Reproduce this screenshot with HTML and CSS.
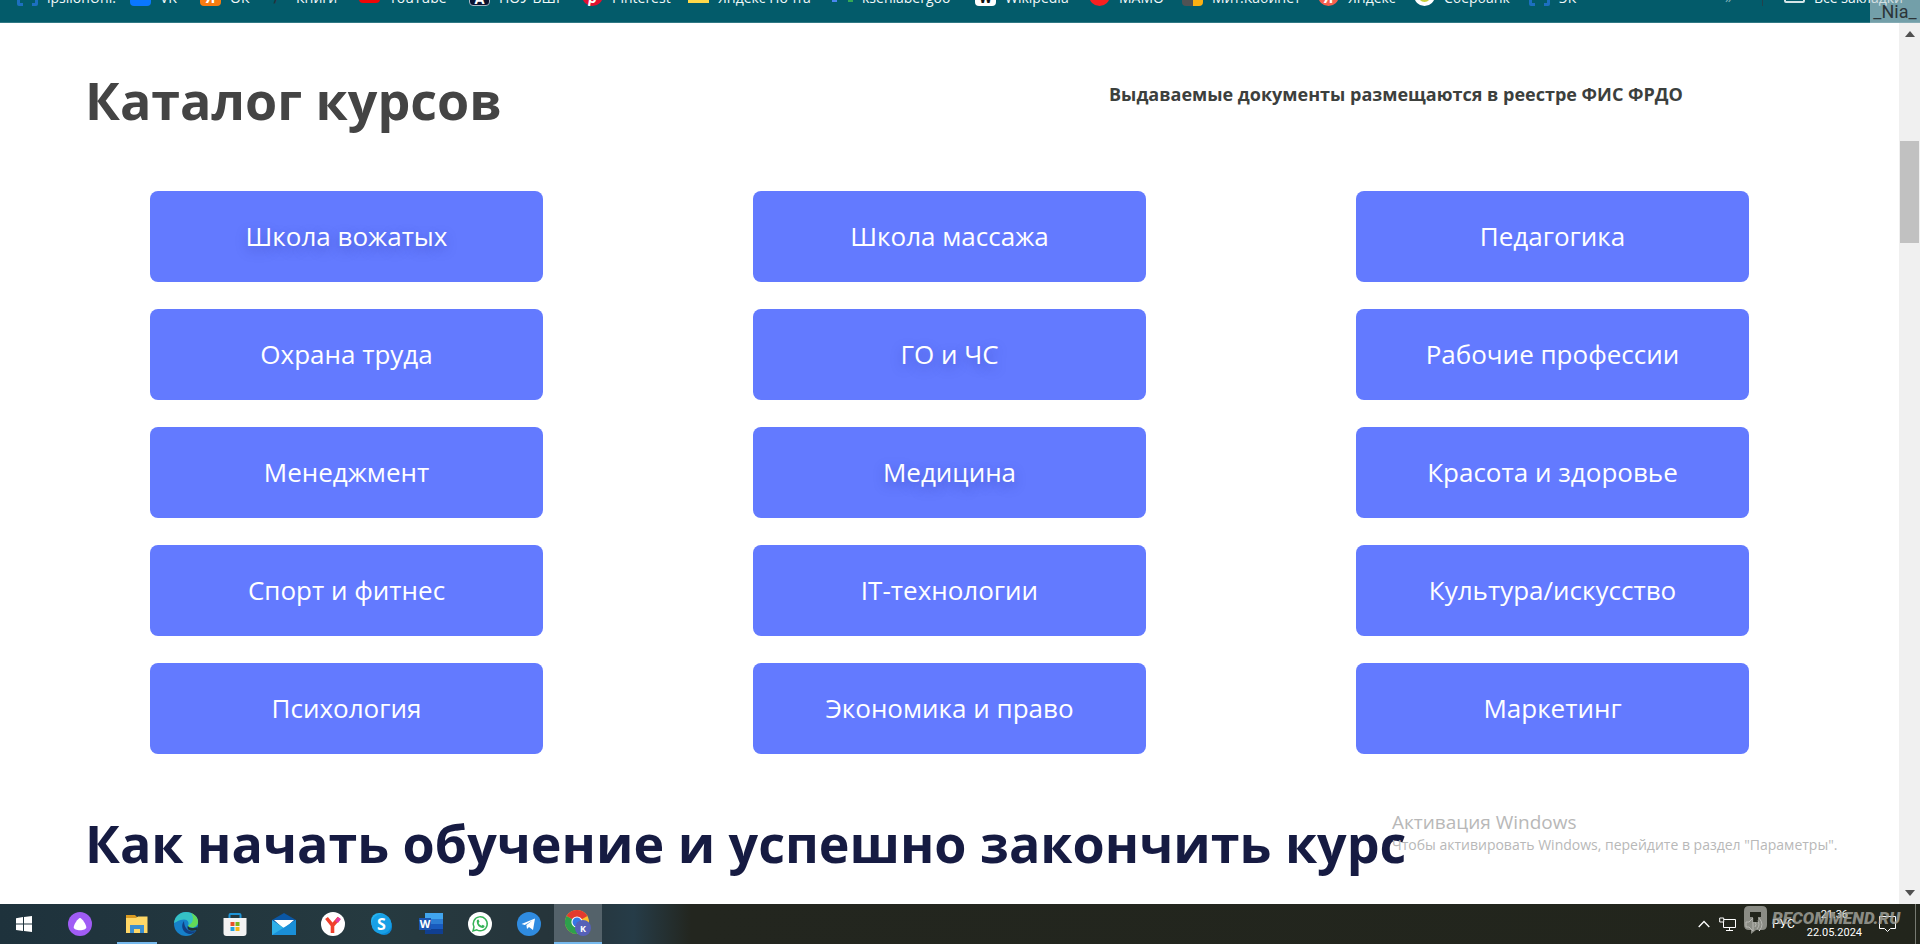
FILE: index.html
```
<!DOCTYPE html>
<html lang="ru">
<head>
<meta charset="utf-8">
<title>Каталог курсов</title>
<link rel="stylesheet" href="styles.css">
</head>
<body>
<div class="screen">
  <nav class="bookmarks" aria-label="Закладки">
    <a class="bm" href="#"><span class="ico brackets"></span>ipsilonUni.</a>
    <a class="bm" href="#"><span class="ico vk"></span>VK</a>
    <a class="bm" href="#"><span class="ico ok">Я</span>ОК</a>
    <a class="bm" href="#"><span class="ico pen">/</span>Книги</a>
    <a class="bm" href="#"><span class="ico yt"></span>YouTube</a>
    <a class="bm" href="#"><span class="ico navy">А</span>НОУ ВШГ</a>
    <a class="bm" href="#"><span class="ico pin">p</span>Pinterest</a>
    <a class="bm" href="#"><span class="ico mailya"></span>Яндекс Почта</a>
    <a class="bm" href="#"><span class="ico meet"></span>kseniabergoo</a>
    <a class="bm" href="#"><span class="ico wiki">W</span>Wikipedia</a>
    <a class="bm" href="#"><span class="ico red"></span>МАМО</a>
    <a class="bm" href="#"><span class="ico duo"></span>Мит.Кабинет</a>
    <a class="bm" href="#"><span class="ico coral">Я</span>Яндекс</a>
    <a class="bm" href="#"><span class="ico sber"></span>Сбербанк</a>
    <a class="bm" href="#"><span class="ico brackets"></span>ЭК</a>
    <a class="bm dim" href="#">»</a>
    <span class="bar-sep"></span>
    <a class="bm" href="#"><span class="ico folder"></span>Все закладки</a>
  </nav>
  <div class="view">
    <main class="page">
      <header class="head">
        <h1>Каталог курсов</h1>
        <p class="note">Выдаваемые документы размещаются в реестре ФИС ФРДО</p>
      </header>
      <div class="courses">
        <button class="course glow">Школа вожатых</button>
        <button class="course">Школа массажа</button>
        <button class="course">Педагогика</button>
        <button class="course">Охрана труда</button>
        <button class="course glow">ГО и ЧС</button>
        <button class="course">Рабочие профессии</button>
        <button class="course">Менеджмент</button>
        <button class="course glow">Медицина</button>
        <button class="course">Красота и здоровье</button>
        <button class="course">Спорт и фитнес</button>
        <button class="course">IT-технологии</button>
        <button class="course">Культура/искусство</button>
        <button class="course">Психология</button>
        <button class="course">Экономика и право</button>
        <button class="course">Маркетинг</button>
      </div>
      <h2>Как начать обучение и успешно закончить курс</h2>
    </main>
    <div class="scroll" aria-hidden="true">
      <svg width="10" height="6" viewBox="0 0 10 6"><path d="M0 6 5 0l5 6z" fill="#505050"/></svg>
      <div class="track"><div class="thumb"></div></div>
      <svg width="10" height="6" viewBox="0 0 10 6"><path d="M0 0h10L5 6z" fill="#505050"/></svg>
    </div>
  </div>
  <footer class="taskbar">
    <div class="apps">
      <button class="app" aria-label="Пуск"><svg viewBox="0 0 24 24"><path d="M4 6.2 11 5v6.5H4zM12 4.9 20 4v7.5h-8zM4 12.5h7V19l-7-1zM12 12.500h8V20l-8-1z" fill="#fff"/></svg></button>
      <button class="app alice" aria-label="Алиса"><svg viewBox="0 0 24 24"><circle cx="12" cy="12" r="12" fill="#a05cf5"/><path d="M12 6c2 0 6.300 7 6.300 9.200 0 2-3 3-6.300 3s-6.300-1-6.300-3C5.700 13 10 6 12 6z" fill="#fff"/></svg></button>
      <button class="app open" aria-label="Проводник"><svg viewBox="0 0 24 24"><path d="M1 3h9l2 2h10v5H1z" fill="#d99a22"/><path d="M1 6h10l2-1.500h9.500V21H1z" fill="#ffd766"/><path d="M5 13h14v8h-4v-4H9v4H5z" fill="#3c8fd0"/></svg></button>
      <button class="app" aria-label="Edge"><svg viewBox="0 0 24 24"><circle cx="12" cy="12" r="12" fill="#1680c9"/><path d="M0 11C1 4 6 0 12 0c7 0 12 4.500 12 9.500 0 4-3 6-6 6-2.500 0-4-1-4-2 1.500-2.500 0-6-4-6-5 0-8 3-10 3.500z" fill="#35c1c4"/><path d="M17 1c4.500 2 7 5 7 8.500 0 4-3 6-6 6-2.500 0-4-1-4-2C20 11 20 5 17 1z" fill="#63d957"/><path d="M10 9c-4 5-1 12 5 13 3 .4 6-1.200 7.500-3.500C17 21 10 18 10 9z" fill="#123f83"/><path d="M14 13.500c0 2 3.500 3.800 9.500 1.500L23 18c-6 2-11 0-9-4.500z" fill="#1e313a"/></svg></button>
      <button class="app" aria-label="Магазин"><svg viewBox="0 0 24 24"><path d="M6.500 7V3q0-1 1-1h9q1 0 1 1v4" fill="none" stroke="#1f93d6" stroke-width="2"/><path d="M0.500 6h23v15q0 3-3 3h-17q-3 0-3-3z" fill="#f3f3f3"/><path d="M7.500 10h4v4h-4z" fill="#e8502a"/><path d="M12.500 10h4v4h-4z" fill="#7bb51b"/><path d="M7.500 15h4v4h-4z" fill="#22a2e0"/><path d="M12.500 15h4v4h-4z" fill="#f7b713"/></svg></button>
      <button class="app" aria-label="Почта"><svg viewBox="0 0 24 24"><path d="M0 8 12 1l12 7v4H0z" fill="#0a57a5"/><path d="M2 8h20L12 17z" fill="#fff"/><path d="M0 8l12 8 12-8v15H0z" fill="#2fb0e8"/><path d="M0 23 24 8v15z" fill="#1a8fd8"/></svg></button>
      <button class="app" aria-label="Яндекс Браузер"><svg viewBox="0 0 24 24"><circle cx="12" cy="12" r="12" fill="#fff"/><path d="M5.500 6 11.500 13.500V21M18 6l-6.500 7.500" fill="none" stroke="#f0402c" stroke-width="3.600"/><path d="M18.500 6l-3 4" stroke="#e43c9c" stroke-width="3.600"/></svg></button>
      <button class="app" aria-label="Skype"><svg viewBox="0 0 24 24"><rect x="1" y="1" width="17" height="17" rx="8" fill="#25b3ee"/><rect x="6" y="6" width="16" height="17" rx="8" fill="#0b8ad8"/><circle cx="11.500" cy="12" r="10" fill="#18a0e6"/><text x="11.500" y="18" text-anchor="middle" class="glyph skype">S</text></svg></button>
      <button class="app" aria-label="Word"><svg viewBox="0 0 24 24"><path d="M6 1h18v6H6z" fill="#41a5ee"/><path d="M6 7h18v5H6z" fill="#2b7cd3"/><path d="M6 12h18v5H6z" fill="#185abd"/><path d="M6 17h18v5H6z" fill="#103f91"/><path d="M0 6h12v12H0z" fill="#1b54b0"/><text x="6" y="16" text-anchor="middle" class="glyph word">W</text></svg></button>
      <button class="app" aria-label="WhatsApp"><svg viewBox="0 0 24 24"><circle cx="12" cy="12" r="12" fill="#fff"/><path d="M5 19l1-4a7 7 0 1 1 2.800 2.900z" fill="none" stroke="#35b357" stroke-width="1.500"/><path d="M9 8l1.500-.4 1 2.200-1 1.200q1 2 3 2.700l1.200-1 2 1.200q-.2 2-2.200 2-5.500-1-5.800-6.500z" fill="#35b357"/></svg></button>
      <button class="app" aria-label="Telegram"><svg viewBox="0 0 24 24"><circle cx="12" cy="12" r="12" fill="#2f8be0"/><path d="M4.500 12 18 6.500 16 18l-4-3-2 2-.6-4 6-4.500L7.800 13z" fill="#fff"/></svg></button>
      <button class="app active" aria-label="Chrome"><svg viewBox="0 0 26 26"><circle cx="12" cy="12" r="12" fill="#fbc02d"/><path d="M12 12 1.600 6A12 12 0 0 1 22.400 6z" fill="#e33b2e"/><path d="M12 12 1.600 6A12 12 0 0 0 12 24z" fill="#2da04c"/><circle cx="12" cy="12" r="5.600" fill="#fff"/><circle cx="12" cy="12" r="4.500" fill="#3478e5"/><circle cx="18" cy="18" r="8" fill="#5661b8"/><text x="18" y="21.500" text-anchor="middle" class="glyph badge">K</text></svg></button>
    </div>
    <div class="tray">
      <svg width="12" height="8" viewBox="0 0 12 8"><path d="M.7 7 6 1.500 11.300 7" fill="none" stroke="#fff" stroke-width="1.300"/></svg>
      <svg width="17" height="15" viewBox="0 0 17 15"><path d="M5 2.500h11.500v8H4.500V5M10.500 10.500v3M7 13.500h7M.7 1h4v4h-4z" fill="none" stroke="#fff"/></svg>
      <svg width="18" height="15" viewBox="0 0 18 15"><path d="M1 5h3l4-4v13l-4-4H1zM10 5q2 2.500 0 5M12 3q4 4.500 0 9M14 1q6 6.500 0 13" fill="none" stroke="#fff"/></svg>
      <span class="lang">РУС</span>
      <div class="clock"><span>21:36</span><span>22.05.2024</span></div>
      <svg class="bell" width="17" height="16" viewBox="0 0 17 16"><path d="M.5 .5h16v12h-5l-3 3-3-3h-5z" fill="none" stroke="#fff"/></svg>
      <span class="desk"></span>
    </div>
  </footer>
  <div class="user">_Nia_</div>
  <div class="activate"><strong>Активация Windows</strong><span>Чтобы активировать Windows, перейдите в раздел "Параметры".</span></div>
  <div class="stamp"><svg width="24" height="28" viewBox="0 0 24 28"><path d="M5 0h13q5 0 5 5v14q0 5-5 5h-6l-5 4v-4H5q-5 0-5-5V5q0-5 5-5z" fill="#a5a69f"/><path d="M6 6h11v5h-3v5h-5v-5H6z" fill="#23251c"/></svg><span>RECOMMEND.RU</span></div>
</div>
</body>
</html>
```

FILE: styles.css
```
* { box-sizing: border-box; }
body { margin: 0; font-family: "Open Sans", "Noto Sans", sans-serif; background: #fff; }
button { border: 0; padding: 0; margin: 0; font: inherit; cursor: pointer; }
.screen { position: relative; min-height: 100vh; display: flex; flex-direction: column; overflow: hidden; }

/* bookmarks strip, scrolled so that only its lower edge shows */
.bookmarks {
  height: 23px; flex: none; overflow: hidden; background: #035b6a; border-bottom: 1px solid #2f7884;
  display: grid; align-content: end; align-items: end; padding: 0 19px 16px 17px;
  grid-template-columns: 113px 70px 66px 93px 110px 113px 106px 144px 143px 114px 93px 136px 96px 115px 196px 37px 22px 1fr;
}
.bm { display: flex; align-items: flex-end; gap: 9px; height: 21px; color: #f2f8f9; font: 14px/16px "Open Sans", sans-serif; text-decoration: none; white-space: nowrap; }
.dim { color: #7fb0b8; }
.ico { width: 21px; height: 21px; flex: none; border-radius: 4px; color: #fff; font: bold 15px/26px Roboto, sans-serif; text-align: center; }
.brackets { border: 3px solid #1d6fc0; border-radius: 2px; background: linear-gradient(#035b6a, #035b6a) center bottom / 7px 100% no-repeat border-box; }
.brackets { border-bottom: 0; background: linear-gradient(90deg, #1d6fc0 3px, transparent 3px 12px, #1d6fc0 12px) center bottom / 15px 3px no-repeat; }
.vk { background: #0a77ff; }
.ok { background: #f77c11; }
.pen { color: #26323a; }
.yt { background: #f00606; height: 16px; margin-bottom: 3px; }
.navy { background: #0b1230; border: 1px solid #aab9c6; }
.pin { background: #e01030; border-radius: 50%; font-style: italic; }
.mailya { background: #ffd84a; height: 16px; margin-bottom: 3px; border-radius: 0; }
.meet { border: solid; border-width: 0 5px; border-color: transparent #35a854 transparent #4a87f0; border-radius: 0; height: 16px; margin-bottom: 4px; }
.wiki { background: #fff; color: #111; }
.red { background: #fa2020; border-radius: 50%; }
.duo { background: linear-gradient(90deg, #505254 50%, #fcb012 50%); }
.coral { background: #f6604e; border-radius: 50%; }
.sber { background: #c9cf3a; border: 4px solid #fff; border-radius: 50%; }
.folder { border: 2px solid #d5e4e7; height: 16px; margin-bottom: 3px; border-radius: 2px; }
.bar-sep { width: 1px; height: 21px; background: #22424c; }

/* page area */
.view { flex: 1; display: flex; }
.page { flex: 1; }
.head { display: grid; grid-template-columns: 1024px 1fr; padding: 41px 0 0 85px; align-items: start; }
h1, h2 { margin: 0; font-size: 52px; line-height: 72px; font-weight: 700; }
h1 { color: #444; }
h2 { color: #161b42; padding: 53px 0 0 85px; white-space: nowrap; }
.note { margin: 17px 0 0; font-size: 18px; line-height: 26px; font-weight: 700; color: #3c403d; }
.courses { display: grid; grid-template-columns: repeat(3, 393px); justify-content: space-between; gap: 27px 0; padding: 55px 150px 0; }
.course { height: 91px; padding-bottom: 2px; border-radius: 8px; background: #637aff; color: #fff; font-size: 26px; line-height: 36px; }
.glow { text-shadow: 0 4px 12px rgba(40, 50, 150, .4); }
.scroll { width: 21px; flex: none; background: #f0f0f0; display: flex; flex-direction: column; align-items: center; padding: 8px 1px; }
.track { flex: 1; align-self: stretch; padding-top: 104px; }
.thumb { height: 102px; background: #c1c1c1; }

/* taskbar */
.taskbar { height: 40px; flex: none; display: flex; justify-content: space-between; color: #fff; background: linear-gradient(90deg, #1e323c 0, #263a40 20%, #26343a 30%, #263c48 33%, #23261f 36%, #22251c 100%); }
.apps { display: flex; gap: 1px; }
.app { width: 48px; height: 40px; background: none; display: flex; align-items: center; justify-content: center; }
.app svg { width: 24px; height: 24px; }
.alice { margin: 0 8px 0 7px; }
.open { background: linear-gradient(#76b9ed, #76b9ed) center bottom / 40px 2px no-repeat; }
.active { background: #54626a; border-bottom: 2px solid #76b9ed; }
.active svg { width: 26px; height: 26px; }
.glyph { fill: #fff; font-family: "Open Sans", sans-serif; font-weight: 700; }
.skype { font-size: 16px; }
.word { font-size: 11px; }
.badge { font-size: 9px; }
.tray { display: flex; align-items: center; gap: 9px; font: 11px/18px Roboto, sans-serif; }
.lang { font-size: 12px; }
.clock { display: flex; flex-direction: column; align-items: center; margin-left: 3px; }
.bell { margin-left: 8px; }
.desk { width: 5px; height: 40px; border-left: 1px solid #777a72; margin-left: 10px; }

/* overlays */
.user { position: absolute; right: 0; top: 0; width: 50px; height: 23px; background: rgba(190, 205, 212, .6); color: #2c3438; font: 18px/24px Roboto, sans-serif; text-align: center; }
.activate { position: absolute; left: 1392px; top: 809px; display: flex; flex-direction: column; color: #b8b8b8; white-space: nowrap; }
.activate strong { font-size: 19px; line-height: 26px; font-weight: 400; }
.activate span { font-size: 14px; line-height: 20px; }
.stamp { position: absolute; left: 1744px; top: 906px; display: flex; gap: 4px; color: #a5a69f; opacity: .8; font: italic 900 17px/24px Roboto, sans-serif; }
```
